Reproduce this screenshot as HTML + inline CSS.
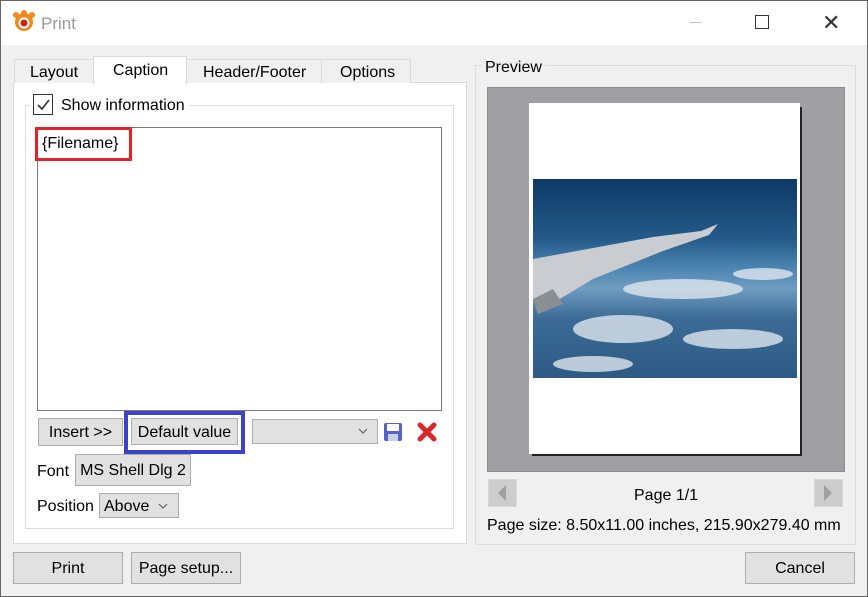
<!DOCTYPE html>
<html><head><style>
*{box-sizing:border-box;margin:0;padding:0}
body{width:868px;height:597px;background:#f0f0f0;font-family:"Liberation Sans",sans-serif;font-size:16px;color:#000;position:relative;overflow:hidden}
.a{position:absolute}
.btn{position:absolute;background:#e1e1e1;border:1px solid #adadad;text-align:center;line-height:29px;padding-top:2px}
.t{position:absolute;white-space:nowrap;margin-top:1px}
</style></head><body>
<div class="a" style="left:0;top:0;width:868px;height:45px;background:#fff"></div>
<div class="a" style="left:0;top:0;width:868px;height:597px;border:1px solid #666;z-index:5;pointer-events:none"></div>
<svg class="a" style="left:11px;top:10px" width="26" height="24" viewBox="0 0 26 24"><g fill="#f08a1c"><circle cx="13" cy="12" r="9"/><circle cx="5" cy="5" r="3"/><circle cx="13" cy="3" r="3"/><circle cx="21" cy="5" r="3"/></g><circle cx="13" cy="13" r="5.5" fill="#fff"/><circle cx="13" cy="13" r="3.5" fill="#d0201a"/></svg>
<div class="t" style="left:41px;top:13px;font-size:17px;color:#999">Print</div>
<div class="a" style="left:690px;top:22px;width:11px;height:1px;background:#bbb"></div>
<div class="a" style="left:755px;top:15px;width:14px;height:14px;border:1px solid #333"></div>
<div class="t" style="left:822px;top:9px;font-size:22px;color:#333">✕</div>

<div class="a" style="left:13px;top:82px;width:454px;height:462px;background:#fff;border:1px solid #d9d9d9"></div>
<div class="a" style="left:14px;top:59px;width:80px;height:24px;background:#f0f0f0;border:1px solid #d9d9d9;border-bottom:none"></div>
<div class="t" style="left:30px;top:63px">Layout</div>
<div class="a" style="left:93px;top:56px;width:94px;height:28px;background:#fff;border:1px solid #d9d9d9;border-bottom:none"></div>
<div class="t" style="left:113px;top:61px">Caption</div>
<div class="a" style="left:186px;top:59px;width:136px;height:24px;background:#f0f0f0;border:1px solid #d9d9d9;border-bottom:none"></div>
<div class="t" style="left:203px;top:63px">Header/Footer</div>
<div class="a" style="left:321px;top:59px;width:90px;height:24px;background:#f0f0f0;border:1px solid #d9d9d9;border-bottom:none"></div>
<div class="t" style="left:340px;top:63px">Options</div>

<div class="a" style="left:25px;top:105px;width:429px;height:424px;border:1px solid #dcdcdc"></div>
<div class="a" style="left:30px;top:95px;width:160px;height:20px;background:#fff"></div>
<div class="a" style="left:33px;top:94px;width:20px;height:21px;border:1px solid #333;background:#fff"></div>
<svg class="a" style="left:36px;top:97px" width="15" height="15"><path d="M2 8 L6 12 L13 3" stroke="#333" stroke-width="1.6" fill="none"/></svg>
<div class="t" style="left:61px;top:96px">Show information</div>

<div class="a" style="left:37px;top:127px;width:405px;height:284px;border:1px solid #7a7a7a;background:#fff"></div>
<div class="a" style="left:35px;top:127px;width:97px;height:34px;border:3px solid #e8202a"></div>
<div class="t" style="left:42px;top:134px">{Filename}</div>

<div class="btn" style="left:38px;top:418px;width:85px;height:28px;line-height:24px">Insert &gt;&gt;</div>
<div class="a" style="left:124px;top:411px;width:121px;height:43px;border:4px solid #3b44c8"></div>
<div class="btn" style="left:131px;top:418px;width:107px;height:27px;line-height:23px">Default value</div>
<div class="a" style="left:252px;top:419px;width:126px;height:25px;background:#e1e1e1;border:1px solid #adadad"></div>
<svg class="a" style="left:358px;top:427px" width="10" height="8"><path d="M1 2 L5 6 L9 2" stroke="#555" fill="none"/></svg>
<svg class="a" style="left:383px;top:422px" width="20" height="20" viewBox="0 0 20 20"><rect x="1" y="1" width="18" height="18" rx="2" fill="#5562c9"/><rect x="4" y="2" width="12" height="7" fill="#fff"/><rect x="5" y="12" width="10" height="7" fill="#c8cde8"/></svg>
<svg class="a" style="left:416px;top:421px" width="22" height="22" viewBox="0 0 22 22"><path d="M4 4 L18 18 M18 4 L4 18" stroke="#d8262a" stroke-width="5" stroke-linecap="round"/></svg>

<div class="t" style="left:37px;top:462px">Font</div>
<div class="btn" style="left:75px;top:454px;width:116px;height:32px;line-height:28px">MS Shell Dlg 2</div>
<div class="t" style="left:37px;top:497px">Position</div>
<div class="a" style="left:99px;top:493px;width:80px;height:25px;background:#e1e1e1;border:1px solid #adadad"></div>
<div class="t" style="left:104px;top:497px">Above</div>
<svg class="a" style="left:158px;top:502px" width="10" height="8"><path d="M1 2 L5 6 L9 2" stroke="#555" fill="none"/></svg>

<div class="btn" style="left:13px;top:552px;width:110px;height:32px;line-height:28px">Print</div>
<div class="btn" style="left:131px;top:552px;width:110px;height:32px;line-height:28px">Page setup...</div>
<div class="btn" style="left:745px;top:552px;width:110px;height:32px;line-height:28px">Cancel</div>

<div class="a" style="left:475px;top:65px;width:381px;height:480px;border:1px solid #dcdcdc"></div>
<div class="t" style="left:482px;top:58px;background:#f0f0f0;padding:0 3px">Preview</div>
<div class="a" style="left:487px;top:87px;width:358px;height:385px;background:#a09fa4;border:1px solid #8a8a8f"></div>
<div class="a" style="left:532px;top:107px;width:270px;height:349px;background:#222"></div>
<div class="a" style="left:529px;top:103px;width:271px;height:351px;background:#fff"></div>
<div class="a" style="left:533px;top:179px;width:264px;height:199px;background:linear-gradient(180deg,#0e3a66 0%,#245a8a 30%,#4d86b2 45%,#6f9cc0 55%,#3b6b96 70%,#2d5a85 100%);overflow:hidden">
<svg width="264" height="199"><path d="M0 80 L120 58 L168 52 L185 45 L176 56 L130 72 L60 100 L10 130 L0 120Z" fill="#c9ccd0"/><path d="M0 120 L20 110 L30 125 L5 135Z" fill="#8a8f96"/><g fill="#dfe6ee" opacity=".8"><ellipse cx="150" cy="110" rx="60" ry="10"/><ellipse cx="90" cy="150" rx="50" ry="14"/><ellipse cx="200" cy="160" rx="50" ry="10"/><ellipse cx="60" cy="185" rx="40" ry="8"/><ellipse cx="230" cy="95" rx="30" ry="6"/></g></svg></div>
<div class="btn" style="left:488px;top:479px;width:29px;height:28px;background:#cdcdcd;border-color:#d6d6d6"></div>
<svg class="a" style="left:496px;top:484px" width="12" height="18"><path d="M10 1 L2 9 L10 17Z" fill="#a0a0a0"/></svg>
<div class="btn" style="left:814px;top:479px;width:29px;height:28px;background:#cdcdcd;border-color:#d6d6d6"></div>
<svg class="a" style="left:822px;top:484px" width="12" height="18"><path d="M2 1 L10 9 L2 17Z" fill="#a0a0a0"/></svg>
<div class="t" style="left:634px;top:486px">Page 1/1</div>
<div class="t" style="left:487px;top:516px">Page size: 8.50x11.00 inches, 215.90x279.40 mm</div>
</body></html>
